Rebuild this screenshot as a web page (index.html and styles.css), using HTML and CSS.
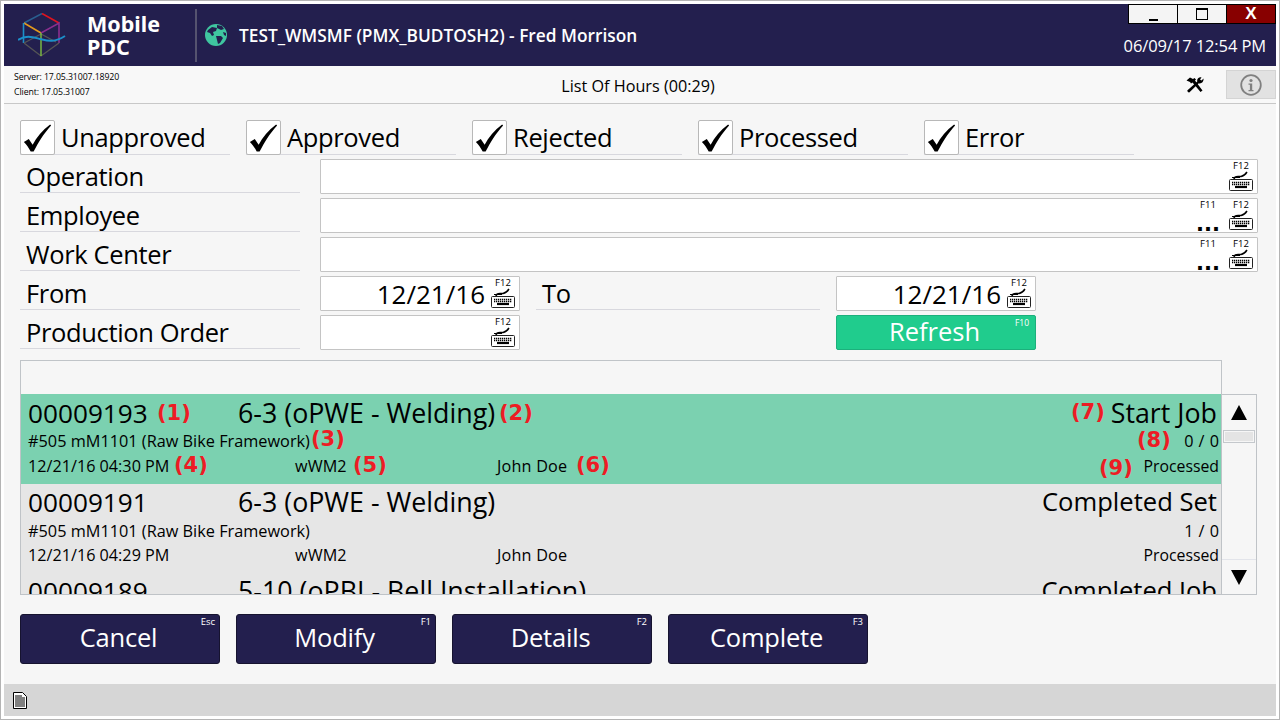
FILE: index.html
```html
<!DOCTYPE html>
<html lang="en">
<head>
<meta charset="utf-8">
<title>Mobile PDC</title>
<link rel="stylesheet" href="styles.css">
</head>
<body>
<svg class="defs" width="0" height="0" aria-hidden="true">
  <symbol id="kbd" viewBox="0 0 24 20">
    <path d="M5 8C5.500 4.500 9 6 12 5.500S16 4 18 1" fill="none" stroke="#000" stroke-width="1.500"/>
    <path d="M3 6.500h8" fill="none" stroke="#000" stroke-width="1"/>
    <rect x="0.500" y="8.500" width="23" height="11" rx="1" fill="#fff" stroke="#222"/>
    <path d="M3 11.500h18M3 13.500h18" stroke="#000" stroke-width="1.500" stroke-dasharray="1.300 .7"/>
    <path d="M6 16h12" stroke="#000" stroke-width="2.200"/>
  </symbol>
  <symbol id="tick" viewBox="0 0 34 34">
    <path d="M3 21l5-3 4 6C16 16 22 9 30 3l1 1C23 13 18 21 13 31h-3C8 27 6 24 3 21z" fill="#000"/>
  </symbol>
</svg>
<div class="app">
  <header class="topbar">
    <svg class="logo" viewBox="0 0 48 44" width="48" height="44">
      <path d="M6 10L24 .5" stroke="#2a5f8f" stroke-width="1.500" fill="none"/>
      <path d="M24 .5L41 10" stroke="#e0141e" stroke-width="1.600" fill="none"/>
      <path d="M6 10L23 20" stroke="#e39a1d" stroke-width="1.600" fill="none"/>
      <path d="M23 20L41 10V30" stroke="#8a2f8f" stroke-width="1.600" fill="none"/>
      <path d="M5.500 10V30" stroke="#1b8fc9" stroke-width="1.600" fill="none"/>
      <path d="M6 30L23 43L41 30M6 30L23 21M23 21L38 29" stroke="#555" stroke-width="1.400" fill="none"/>
      <path d="M23 20V43" stroke="#7fc241" stroke-width="1.400" fill="none"/>
      <path d="M0 27C8 22 14 24 22 26S36 30 47 23" stroke="#1b8fc9" stroke-width="2" fill="none"/>
    </svg>
    <div class="brand">Mobile<br>PDC</div>
    <div class="divider"></div>
    <svg class="globe" viewBox="0 0 22 22" width="22" height="22">
      <circle cx="11" cy="11" r="11" fill="#3fc6a0"/>
      <path d="M3 6l4-3 5 1-1 3-3 1 1 3-2 1-2-3-3-1zM12 1l5 1 2 3-3 1-4-2zM11 12l5 0 2 2-3 5-2 1-1-4zM18 8l3 1 0 3-2-1z" fill="#231f4e"/>
    </svg>
    <div class="title">TEST_WMSMF (PMX_BUDTOSH2) - Fred Morrison</div>
    <div class="winarea">
      <div class="winbtns">
        <div class="winbtn"><span class="minglyph"></span></div>
        <div class="winbtn"><span class="maxglyph"></span></div>
        <div class="winbtn close">X</div>
      </div>
      <div class="clock">06/09/17 12:54 PM</div>
    </div>
  </header>

  <div class="subbar">
    <div class="versions"><div>Server: 17.05.31007.18920</div><div>Client: 17.05.31007</div></div>
    <div class="subtitle">List Of Hours (00:29)</div>
    <svg class="tools" viewBox="0 0 18 16" width="18" height="16">
      <path d="M.5 3.500L4 .5l3 1.500 1.500-1L10 2.500 9 3.500 16.500 13.500 14.500 15 6.500 5.500 5 6.500 4 5z" fill="#000"/>
      <path d="M17.500 1.500L15.500 3.500 14 2.500 15.500.5C13-.3 10.500 2 11.300 4.500L1.500 13.200C.7 14.200 2.500 16 3.500 15.200L12.800 6.300C15.500 7.200 18 4.500 17.500 1.500z" fill="#000"/>
    </svg>
    <div class="infobtn">
      <svg viewBox="0 0 22 22" width="22" height="22">
        <circle cx="11" cy="11" r="9.800" fill="none" stroke="#808080" stroke-width="1.800"/>
        <circle cx="11" cy="6.500" r="1.600" fill="#808080"/>
        <path d="M8.500 9.500h3.700V16h1.300v1.200h-5V16h1.400v-5.300H8.500z" fill="#808080"/>
      </svg>
    </div>
  </div>

  <main class="content">
    <div class="checks">
      <label class="check"><span class="box"><svg width="34" height="34"><use href="#tick"/></svg></span><span>Unapproved</span></label>
      <label class="check"><span class="box"><svg width="34" height="34"><use href="#tick"/></svg></span><span>Approved</span></label>
      <label class="check"><span class="box"><svg width="34" height="34"><use href="#tick"/></svg></span><span>Rejected</span></label>
      <label class="check"><span class="box"><svg width="34" height="34"><use href="#tick"/></svg></span><span>Processed</span></label>
      <label class="check"><span class="box"><svg width="34" height="34"><use href="#tick"/></svg></span><span>Error</span></label>
    </div>

    <div class="formrow">
      <div class="flabel">Operation</div>
      <div class="input wide"><span class="keys"><span class="key"><small>F12</small><svg class="kb" width="24" height="20"><use href="#kbd"/></svg></span></span></div>
    </div>
    <div class="formrow">
      <div class="flabel">Employee</div>
      <div class="input wide"><span class="keys"><span class="key"><small>F11</small><b class="dots">...</b></span><span class="key"><small>F12</small><svg class="kb" width="24" height="20"><use href="#kbd"/></svg></span></span></div>
    </div>
    <div class="formrow">
      <div class="flabel">Work Center</div>
      <div class="input wide"><span class="keys"><span class="key"><small>F11</small><b class="dots">...</b></span><span class="key"><small>F12</small><svg class="kb" width="24" height="20"><use href="#kbd"/></svg></span></span></div>
    </div>
    <div class="formrow">
      <div class="flabel">From</div>
      <div class="input short"><span class="val">12/21/16</span><span class="keys"><span class="key"><small>F12</small><svg class="kb" width="24" height="20"><use href="#kbd"/></svg></span></span></div>
      <div class="flabel tolabel">To</div>
      <div class="input short"><span class="val">12/21/16</span><span class="keys"><span class="key"><small>F12</small><svg class="kb" width="24" height="20"><use href="#kbd"/></svg></span></span></div>
    </div>
    <div class="formrow">
      <div class="flabel">Production Order</div>
      <div class="input short"><span class="val"></span><span class="keys"><span class="key"><small>F12</small><svg class="kb" width="24" height="20"><use href="#kbd"/></svg></span></span></div>
      <div class="spacer"></div>
      <div class="refresh">Refresh<small>F10</small></div>
    </div>

    <div class="listhead"></div>
    <div class="listwrap">
      <div class="list">
        <article class="item selected">
          <div class="l1"><span class="c-id">00009193</span><span class="c-op">6-3 (oPWE - Welding)</span><span class="c-r big">Start Job</span></div>
          <div class="l2"><span>#505 mM1101 (Raw Bike Framework)</span><span class="c-r">0 / 0</span></div>
          <div class="l3"><span class="c-date">12/21/16 04:30 PM</span><span class="c-wc">wWM2</span><span class="c-emp">John Doe</span><span class="c-r">Processed</span></div>
          <i class="note n1">(1)</i><i class="note n2">(2)</i><i class="note n3">(3)</i><i class="note n4">(4)</i><i class="note n5">(5)</i><i class="note n6">(6)</i><i class="note n7">(7)</i><i class="note n8">(8)</i><i class="note n9">(9)</i>
        </article>
        <article class="item">
          <div class="l1"><span class="c-id">00009191</span><span class="c-op">6-3 (oPWE - Welding)</span><span class="c-r">Completed Set</span></div>
          <div class="l2"><span>#505 mM1101 (Raw Bike Framework)</span><span class="c-r">1 / 0</span></div>
          <div class="l3"><span class="c-date">12/21/16 04:29 PM</span><span class="c-wc">wWM2</span><span class="c-emp">John Doe</span><span class="c-r">Processed</span></div>
        </article>
        <article class="item">
          <div class="l1"><span class="c-id">00009189</span><span class="c-op">5-10 (oPBI - Bell Installation)</span><span class="c-r">Completed Job</span></div>
        </article>
      </div>
      <div class="scroll">
        <div class="arrow up"></div>
        <div class="thumb"></div>
        <div class="track"></div>
        <div class="arrow down"></div>
      </div>
    </div>

    <div class="actions">
      <div class="action">Cancel<small>Esc</small></div>
      <div class="action">Modify<small>F1</small></div>
      <div class="action">Details<small>F2</small></div>
      <div class="action">Complete<small>F3</small></div>
    </div>
  </main>

  <footer class="statusbar">
    <svg viewBox="0 0 14 17" width="14" height="17">
      <path d="M.5.5h9l4 4v12H.5z" fill="#fff" stroke="#000"/>
      <path d="M2 4h7M2 6h10M2 8h10M2 10h10M2 12h10M2 14h10" stroke="#000"/>
    </svg>
  </footer>
</div>
</body>
</html>
```

FILE: styles.css
```css
* { box-sizing: border-box; }
html, body { margin: 0; height: 100%; }
body {
  width: 1280px; height: 720px; overflow: hidden;
  background: #fff;
  border: 1px solid #b4b4b4;
  padding: 3px;
  font-family: "Open Sans", "Noto Sans", sans-serif;
  color: #000;
}
.defs { position: absolute; }
.app { display: flex; flex-direction: column; height: 100%; background: #f6f6f6; }

.topbar { height: 62px; background: #231f4e; color: #fff; display: flex; align-items: center; padding-left: 14px; flex: none; }
.logo { flex: none; }
.brand { font-family: "Noto Sans", sans-serif; font-weight: 700; font-size: 21.500px; line-height: 23px; margin-left: 21px; width: 108px; flex: none; }
.divider { width: 2px; height: 53px; background: #55536f; flex: none; }
.globe { margin-left: 8px; flex: none; }
.title { font-weight: 600; font-size: 17.300px; margin-left: 12px; white-space: nowrap; }
.winarea { margin-left: auto; align-self: stretch; display: flex; flex-direction: column; align-items: flex-end; }
.winbtns { display: flex; height: 20px; border: 1px solid #000; }
.winbtn { width: 49px; height: 100%; background: #f4f4f4; border-right: 1px solid #000; display: flex; align-items: center; justify-content: center; font-size: 16px; font-weight: 700; }
.winbtn.close { width: 48px; background: #880000; color: #fff; border-right: 0; font-family: "Liberation Sans", sans-serif; font-size: 17px; }
.minglyph { width: 9px; height: 2px; background: #000; margin-top: 11px; }
.maxglyph { width: 12px; height: 12px; border: 1px solid #000; border-top-width: 2px; }
.clock { font-size: 16.500px; line-height: 22px; margin-top: 11px; margin-right: 10px; letter-spacing: -.1px; }

.subbar { height: 38px; display: flex; align-items: center; flex: none; border-bottom: 1px solid #c8c8c8; position: relative; background: #f8f8f8; }
.versions { font-size: 8.750px; line-height: 15px; margin-left: 10px; width: 120px; white-space: nowrap; letter-spacing: -.1px; }
.subtitle { position: absolute; left: 0; right: 4px; top: 8px; line-height: 24px; text-align: center; font-size: 16.200px; }
.tools { margin-left: auto; margin-right: 22px; }
.infobtn { width: 50px; height: 29px; background: #e2e2e2; border: 1px solid #d4d4d4; display: flex; align-items: center; justify-content: center; }

.content { flex: 1; padding: 16px 16px 0; }
.checks { display: flex; gap: 16px; height: 35px; margin-bottom: 4px; }
.check { width: 210px; display: flex; align-items: flex-start; border-bottom: 1px solid #d8d8de; height: 35px; font-size: 25.500px; line-height: 34px; letter-spacing: -.35px; }
.box { width: 35px; height: 35px; background: #fff; border: 1px solid #b8b8b8; border-radius: 2px; margin-right: 6px; flex: none; display: flex; align-items: center; justify-content: center; }

.formrow { display: flex; height: 35px; margin-bottom: 4px; align-items: flex-start; }
.flabel { width: 280px; height: 34px; margin-right: 20px; padding-left: 6px; border-bottom: 1px solid #d8d8de; font-size: 25.500px; line-height: 34px; white-space: nowrap; letter-spacing: -.35px; }
.tolabel { width: 284px; margin-left: 16px; margin-right: 16px; }
.spacer { width: 316px; }
.input { height: 35px; background: #fff; border: 1px solid #c4c4c4; border-radius: 1px; display: flex; align-items: center; justify-content: flex-end; }
.input.wide { width: 938px; }
.input.short { width: 200px; }
.val { flex: 1; text-align: right; font-size: 26px; line-height: 34px; padding-right: 6px; }
.keys { display: flex; gap: 9px; padding-right: 4px; height: 100%; flex: none; }
.key { width: 24px; position: relative; display: block; height: 100%; text-align: center; }
.key small { font-size: 9.500px; line-height: 10px; position: absolute; top: 1px; left: 0; right: 0; text-align: center; }
.kb { position: absolute; left: 0; bottom: 2px; }
.dots { position: absolute; left: -4px; right: -4px; bottom: 0; font: 700 21px/16px "DejaVu Sans", sans-serif; text-align: center; }
.refresh { width: 200px; height: 35px; background: #20cc8d; border: 1px solid #1cb07c; border-radius: 2px; color: #fff; font-size: 25.500px; line-height: 30px; text-align: center; padding-right: 3px; position: relative; }
.refresh small { position: absolute; top: 0; right: 6px; font-size: 8.500px; line-height: 14px; }

.listhead { height: 34px; width: 1202px; margin-top: 10px; background: #f6f6f6; border: 1px solid #c0c4c8; border-bottom: 0; }
.listwrap { display: flex; height: 201px; }
.list { width: 1202px; height: 201px; overflow: hidden; border: 1px solid #bfc3c7; border-width: 0 1px 1px 1px; background: #e6e6e6; }
.item { height: 90px; padding: 0 2px 0 7px; position: relative; background: #e6e6e6; }
.item::after { content: ""; position: absolute; left: 7px; right: 5px; bottom: 0; height: 1px; background: #b8b8b8; }
.item.selected { background: #7bd1b0; height: 91px; padding-top: 1px; }
.item.selected::after { display: none; }
.l1 { height: 36px; margin-top: -1px; padding-right: 2px; display: flex; font-size: 26.800px; line-height: 36px; white-space: nowrap; }
.l2 { height: 24px; display: flex; font-size: 16.300px; line-height: 22px; white-space: nowrap; }
.l3 { height: 24px; display: flex; font-size: 16.200px; line-height: 22px; white-space: nowrap; }
.selected .l1 { height: 35px; margin-top: 0; }
.selected .l2 { height: 25px; }
.c-id { width: 210px; flex: none; font-size: 26.200px; }
.c-date { width: 267px; flex: none; }
.c-wc { width: 202px; flex: none; letter-spacing: .1px; }
.c-emp { letter-spacing: .2px; }
.c-r { margin-left: auto; font-size: 25.600px; }
.l2 .c-r { font-size: 16.200px; word-spacing: 1px; }
.l3 .c-r { font-size: 15.800px; }
.c-r.big { font-size: 26.800px; }
.note { position: absolute; font: 700 21px/26px "DejaVu Sans", sans-serif; color: #ed1c24; }
.n1 { left: 136px; top: 6px; }
.n2 { left: 478px; top: 6px; }
.n3 { left: 290px; top: 32px; }
.n4 { left: 153px; top: 58px; }
.n5 { left: 332px; top: 58px; }
.n6 { left: 555px; top: 58px; }
.n7 { left: 1050px; top: 5px; }
.n8 { left: 1116px; top: 33px; }
.n9 { left: 1078px; top: 61px; }

.scroll { width: 35px; height: 201px; border: 1px solid #bfc3c7; border-left: 0; display: flex; flex-direction: column; background: #f6f6f6; }
.arrow { flex: none; display: flex; align-items: center; justify-content: center; height: 34px; }
.arrow.up::before { content: ""; border-style: solid; border-color: transparent; border-width: 0 8.500px 15px; border-bottom-color: #000; }
.arrow.down::before { content: ""; border-style: solid; border-color: transparent; border-width: 15px 8.500px 0; border-top-color: #000; }
.thumb { height: 13px; margin: 1px 0 0 1px; width: 32px; background: #e4e4e4; border: 2px solid #f6f6f6; outline: 1px solid #c4c8cc; outline-offset: -1px; flex: none; }
.track { flex: 1; border-bottom: 1px solid #e2e4ea; }

.actions { display: flex; gap: 16px; margin-top: 19px; }
.action { width: 200px; height: 50px; background: #231f4e; border: 1px solid #16132f; border-radius: 3px; color: #fff; font-size: 25.500px; line-height: 44px; letter-spacing: -.2px; text-align: center; padding-right: 3px; position: relative; }
.action small { position: absolute; top: 0; right: 4px; font-size: 9.500px; line-height: 14px; letter-spacing: 0; }

.statusbar { height: 32px; background: #d6d6d6; flex: none; display: flex; align-items: center; padding-left: 9px; }
```
